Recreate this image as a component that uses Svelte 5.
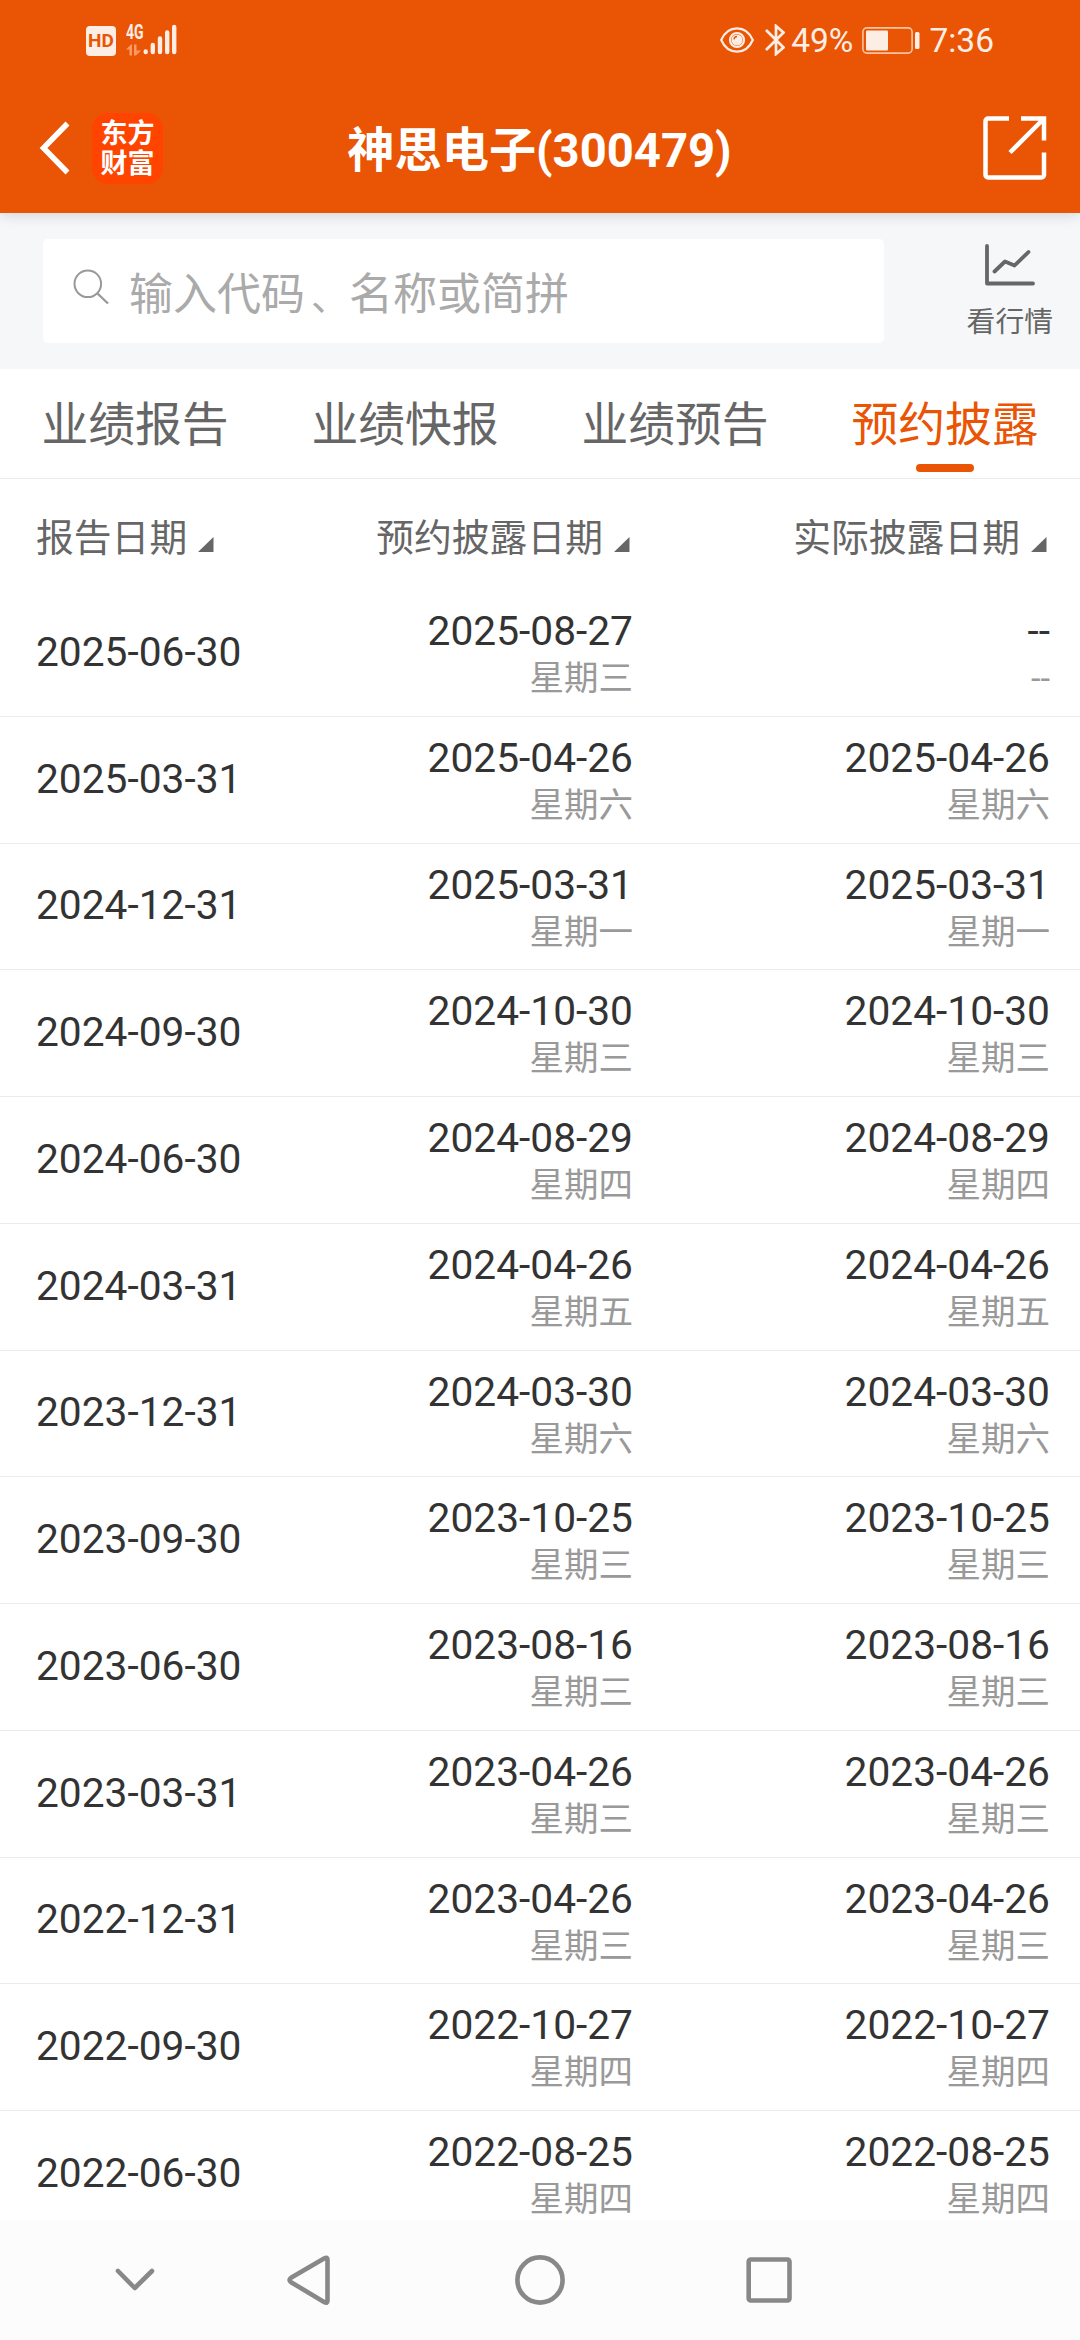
<script>
  const tabs = ["业绩报告", "业绩快报", "业绩预告", "预约披露"];
  let active = $state(3);

  const columns = ["报告日期", "预约披露日期", "实际披露日期"];

  const rows = [
    { period: "2025-06-30", planned: ["2025-08-27", "星期三"], actual: ["--", "--"] },
    { period: "2025-03-31", planned: ["2025-04-26", "星期六"], actual: ["2025-04-26", "星期六"] },
    { period: "2024-12-31", planned: ["2025-03-31", "星期一"], actual: ["2025-03-31", "星期一"] },
    { period: "2024-09-30", planned: ["2024-10-30", "星期三"], actual: ["2024-10-30", "星期三"] },
    { period: "2024-06-30", planned: ["2024-08-29", "星期四"], actual: ["2024-08-29", "星期四"] },
    { period: "2024-03-31", planned: ["2024-04-26", "星期五"], actual: ["2024-04-26", "星期五"] },
    { period: "2023-12-31", planned: ["2024-03-30", "星期六"], actual: ["2024-03-30", "星期六"] },
    { period: "2023-09-30", planned: ["2023-10-25", "星期三"], actual: ["2023-10-25", "星期三"] },
    { period: "2023-06-30", planned: ["2023-08-16", "星期三"], actual: ["2023-08-16", "星期三"] },
    { period: "2023-03-31", planned: ["2023-04-26", "星期三"], actual: ["2023-04-26", "星期三"] },
    { period: "2022-12-31", planned: ["2023-04-26", "星期三"], actual: ["2023-04-26", "星期三"] },
    { period: "2022-09-30", planned: ["2022-10-27", "星期四"], actual: ["2022-10-27", "星期四"] },
    { period: "2022-06-30", planned: ["2022-08-25", "星期四"], actual: ["2022-08-25", "星期四"] },
  ];
</script>

<div class="screen">
  <header>
    <div class="status">
      <span class="hd">HD</span>
      <div class="network">
        <span>4G</span>
        <svg width="16" height="12" viewBox="0 0 16 12">
          <path d="M0 5.5 5 .5h1v11H3.5v-6zM8 .5h2.500v6H15l-5 5H8z" fill="#ff9a66" />
        </svg>
      </div>
      <svg class="signal" width="34" height="32" viewBox="0 0 34 32">
        <g stroke="#fdeee5" stroke-width="4.400" stroke-linecap="round">
          <path d="M2.700 28v-.5M9.800 28v-7M17 28V14.500M24.200 28V8.500M31.200 28V3" />
        </g>
      </svg>
      <div class="status-right">
        <svg width="34" height="26" viewBox="0 0 34 26" fill="none" stroke="#fdeee5" stroke-width="2.200">
          <path d="M1.200 13C8-2.500 26-2.500 32.800 13 26 28.500 8 28.500 1.200 13z" />
          <circle cx="17" cy="13" r="7" />
          <circle cx="17" cy="13" r="5.500" fill="#fdeee5" stroke="none" />
          <path d="M14 12.500q.2-2.800 3-3" stroke="#e95504" stroke-width="1.300" />
        </svg>
        <svg class="bluetooth" width="20" height="32" viewBox="0 0 20 32" fill="none" stroke="#fdeee5" stroke-width="2.700">
          <path d="M1 6 18.500 23.500 11 30V2l7.500 6.500L1 26" />
        </svg>
        <span class="percent">49%</span>
        <svg class="battery" width="58" height="27" viewBox="0 0 58 27">
          <rect x=".9" y=".9" width="49.200" height="25.200" rx="4" fill="none" stroke="#fac3a1" stroke-width="1.600" />
          <rect x="4" y="3.500" width="22" height="20" rx="1" fill="#fdeee5" />
          <rect x="53" y="5" width="4.500" height="17" rx="1.500" fill="#fdeee5" />
        </svg>
        <span class="clock">7:36</span>
      </div>
    </div>
    <div class="titlebar">
      <svg class="back" width="32" height="54" viewBox="0 0 32 54" fill="none" stroke="#fff" stroke-width="5.500">
        <path d="M29.500 2.500 5.500 27l24 24.500" />
      </svg>
      <div class="logo"><span>东方</span><span>财富</span></div>
      <h1>神思电子(300479)</h1>
      <svg class="share" width="64" height="64" viewBox="0 0 64 64" fill="none" stroke="#fff" stroke-width="4.500">
        <path d="M26 2.500H5a2.500 2.500 0 0 0-2.500 2.500v54A2.500 2.500 0 0 0 5 61.500h53.500a2.500 2.500 0 0 0 2.500-2.500V36.500M38 2.500h23V24.500M61 2.500 27 36.500" />
      </svg>
    </div>
  </header>

  <div class="search">
    <label class="box">
      <svg width="36" height="36" viewBox="0 0 36 36" fill="none" stroke="#999" stroke-width="2">
        <circle cx="14.800" cy="14.800" r="13.300" />
        <path d="m24.500 24.500 10.500 10" stroke-width="2.400" />
      </svg>
      <span>输入代码<i>、</i>名称或简拼</span>
    </label>
    <div class="quote">
      <svg width="50" height="42" viewBox="0 0 50 42" fill="none" stroke="#666" stroke-width="3.800" stroke-linecap="round" stroke-linejoin="round">
        <path d="M2 2v37.500h46M9.500 27.500 20 17.500l9.500 4L43.500 8" />
      </svg>
      <span>看行情</span>
    </div>
  </div>

  <nav class="tabs">
    {#each tabs as tab, i}
      <button class:active={active === i} onclick={() => (active = i)}>{tab}</button>
    {/each}
  </nav>

  <div class="head">
    {#each columns as column}
      <div class="cell">
        <span>{column}</span>
        <svg width="16" height="15" viewBox="0 0 16 15"><path d="M0 15 15.500 0v15z" fill="#666" /></svg>
      </div>
    {/each}
  </div>

  <main>
    {#each rows as row}
      <div class="row">
        <div class="period">{row.period}</div>
        {#each [row.planned, row.actual] as [date, weekday]}
          <div class="day">
            <span class="date">{date}</span>
            <span class="weekday">{weekday}</span>
          </div>
        {/each}
      </div>
    {/each}
  </main>

  <footer>
    <svg width="1080" height="120" viewBox="0 0 1080 120" fill="none" stroke="#888" stroke-width="4.600" stroke-linecap="round" stroke-linejoin="round">
      <path d="m118 51 16.800 17L152 51" />
      <path d="M324.500 38.200q3-1.500 3 1.500v41q0 3-3 1.500L291 62.200q-3-2.200 0-4.400z" />
      <circle cx="540" cy="60" r="22.600" />
      <rect x="748.700" y="39.500" width="40.800" height="41" rx="2" />
    </svg>
  </footer>
</div>

<style>
  :global(body) {
    margin: 0;
    background: #fff;
  }

  .screen {
    display: flex;
    flex-direction: column;
    width: 1080px;
    height: 2340px;
    overflow: hidden;
    background: #fff;
    color: #333;
    font-family: Roboto, "Noto Sans CJK SC", sans-serif;
  }

  header {
    position: relative;
    flex: none;
    height: 213px;
    background: #e95504;
    color: #fff;
    box-shadow: 0 1px 14px rgba(0, 0, 0, 0.16);
  }

  .status {
    display: flex;
    align-items: center;
    height: 80px;
    padding: 0 86px 0 86px;
    color: #fdeee5;
  }

  .hd {
    width: 30px;
    height: 30px;
    margin-top: 2px;
    border-radius: 4px;
    background: #fdeee5;
    color: #e95504;
    font-size: 19px;
    font-weight: 700;
    line-height: 30px;
    text-align: center;
  }

  .network {
    display: flex;
    flex-direction: column;
    width: 17px;
    height: 32px;
    margin-left: 10px;
  }

  .network span {
    height: 20px;
    font-size: 20px;
    font-weight: 700;
    line-height: 16px;
    transform: scaleX(0.7);
    transform-origin: left;
  }

  .status-right {
    display: flex;
    align-items: center;
    margin-left: auto;
  }

  .bluetooth {
    margin-left: 11px;
  }

  .percent,
  .clock {
    font-size: 33.500px;
    line-height: 40px;
    margin-top: 2px;
  }

  .percent {
    margin-left: 6px;
  }

  .battery {
    margin-left: 9px;
  }

  .clock {
    margin-left: 9px;
  }

  .titlebar {
    display: flex;
    align-items: center;
    height: 136px;
    padding: 0 33px 0 38px;
  }

  .logo {
    display: flex;
    flex-direction: column;
    align-items: center;
    justify-content: center;
    box-sizing: border-box;
    width: 71px;
    height: 71px;
    margin-left: 22px;
    padding-top: 2px;
    border-radius: 16px;
    background: #ff4400;
    font-size: 27px;
    font-weight: 700;
    line-height: 30px;
  }

  h1 {
    flex: 1;
    margin: 0 0 4px -67px;
    font-size: 47.200px;
    font-weight: 700;
    text-align: center;
  }

  .search {
    display: flex;
    flex: none;
    box-sizing: border-box;
    height: 156px;
    padding: 26px 27px 0 43px;
    background: #f6f7f9;
  }

  .box {
    display: flex;
    align-items: center;
    width: 841px;
    height: 104px;
    border-radius: 5px;
    background: #fff;
    color: #aaa;
    font-size: 44px;
  }

  .box svg {
    margin: -8px 20px 0 30px;
  }

  .box i {
    margin-left: 6px;
    font-size: 38px;
    font-style: normal;
  }

  .quote {
    display: flex;
    flex-direction: column;
    align-items: center;
    margin-left: auto;
    padding-top: 5px;
    color: #666;
    font-size: 28.800px;
    line-height: 40px;
  }

  .quote span {
    margin-top: 16px;
  }

  .tabs {
    display: grid;
    flex: none;
    grid-template-columns: repeat(4, 270px);
    height: 109px;
    border-bottom: 1px solid #ebebeb;
  }

  .tabs button {
    position: relative;
    padding: 0 0 6px;
    border: 0;
    background: none;
    color: #666;
    font: inherit;
    font-size: 46.800px;
  }

  .tabs .active {
    color: #e95504;
  }

  .tabs .active::after {
    content: "";
    position: absolute;
    bottom: 6px;
    left: 106px;
    width: 58px;
    height: 8px;
    border-radius: 4px;
    background: #e95504;
  }

  .head,
  .row {
    display: grid;
    flex: none;
    grid-template-columns: 297px 300px 417px;
    padding: 0 30px 0 36px;
  }

  .head {
    height: 111px;
    color: #666;
    font-size: 37.800px;
  }

  .cell {
    display: flex;
    align-items: center;
    justify-content: flex-end;
  }

  .cell:first-child {
    justify-content: flex-start;
  }

  .cell svg {
    margin: 20px 3px 0 11px;
  }

  main {
    flex: 1;
    min-height: 0;
    overflow: hidden;
  }

  .row {
    box-sizing: border-box;
    height: 126.750px;
    border-bottom: 1px solid #ebebeb;
    font-size: 40.700px;
  }

  .period {
    display: flex;
    align-items: center;
    padding-bottom: 2px;
  }

  .day {
    display: flex;
    flex-direction: column;
    align-items: flex-end;
    padding-top: 18px;
  }

  .date {
    line-height: 46px;
  }

  .weekday {
    color: #999;
    font-size: 34.500px;
    line-height: 49px;
  }

  footer {
    flex: none;
    height: 120px;
    background: #fcfcfc;
  }

  footer svg {
    display: block;
  }
</style>
